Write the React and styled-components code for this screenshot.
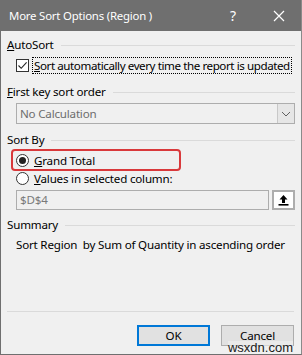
import React from 'react'
import styled, { createGlobalStyle } from 'styled-components'

const Global = createGlobalStyle`
    html, body {
        margin: 0;
        padding: 0;
        background: #f0f0f0;
    }
    * {
        box-sizing: border-box;
    }
`

const App = () => {
    return (
        <>
            <Global />
            <Dialog>
                <TitleBar>
                    <Title>More Sort Options (Region )</Title>
                    <Help>?</Help>
                    <Close>
                        <svg width="12" height="12" viewBox="0 0 12 12">
                            <path d="M1 1 L11 11 M11 1 L1 11" stroke="#fff" strokeWidth="1.2" />
                        </svg>
                    </Close>
                </TitleBar>

                <Body>
                    <GroupLabel $top={6}>
                        <span><u>A</u>utoSort</span>
                        <Rule />
                    </GroupLabel>
                    <CheckRow>
                        <CheckBox>
                            <svg width="11" height="11" viewBox="0 0 11 11">
                                <path d="M1.5 5.5 L4.2 8.3 L9.6 2.4" fill="none" stroke="#222" strokeWidth="1.1" />
                            </svg>
                        </CheckBox>
                        <Focus><u>S</u>ort automatically every time the report is updated</Focus>
                    </CheckRow>

                    <GroupLabel $top={10}>
                        <span><u>F</u>irst key sort order</span>
                        <Rule />
                    </GroupLabel>
                    <Combo>
                        <ComboText>No Calculation</ComboText>
                        <ComboArrow>
                            <svg width="10" height="6" viewBox="0 0 10 6">
                                <path d="M1 1 L5 5 L9 1" fill="none" stroke="#606060" strokeWidth="1" />
                            </svg>
                        </ComboArrow>
                    </Combo>

                    <GroupLabel $top={8}>
                        <span>Sort By</span>
                        <Rule />
                    </GroupLabel>
                    <Highlight>
                        <Radio $checked />
                        <RadioText><u>G</u>rand Total</RadioText>
                    </Highlight>
                    <RadioRow>
                        <Radio />
                        <RadioText><u>V</u>alues in selected column:</RadioText>
                    </RadioRow>
                    <RefRow>
                        <RefInput>$D$4</RefInput>
                        <RefButton>
                            <svg width="11" height="12" viewBox="0 0 11 12">
                                <path d="M5.5 1 L1.5 5.5 H4 V9 H7 V5.5 H9.5 Z" fill="#000" />
                                <rect x="0.5" y="10" width="10" height="1.6" fill="#000" />
                            </svg>
                        </RefButton>
                    </RefRow>

                    <GroupLabel $top={7}>
                        <span>Summary</span>
                        <Rule />
                    </GroupLabel>
                    <Summary>Sort Region&nbsp; by Sum of Quantity in ascending order</Summary>

                    <Spacer />
                    <Separator />
                    <Buttons>
                        <Button $primary>OK</Button>
                        <Button>Cancel</Button>
                    </Buttons>
                </Body>
                <Watermark>wsxdn.com</Watermark>
            </Dialog>
        </>
    )
}

export default App

const Dialog = styled.div`
    position: relative;
    width: 302px;
    height: 355px;
    display: flex;
    flex-direction: column;
    background: #f0f0f0;
    border-left: 1px solid #6f6f6f;
    border-right: 1px solid #8a8a8a;
    border-bottom: 1px solid #6f6f6f;
    font-family: "Noto Sans", "Liberation Sans", sans-serif;
    font-size: 11.6px;
    letter-spacing: -0.2px;
    color: #000;
    overflow: hidden;
`

const TitleBar = styled.div`
    height: 31px;
    flex: none;
    margin: 0 -1px;
    background: #6f6f6f;
    display: flex;
    align-items: center;
    padding: 0 0 0 9px;
    color: #fff;
`

const Title = styled.div`
    flex: 1;
    font-size: 11.4px;
    letter-spacing: -0.2px;
`

const Help = styled.div`
    width: 46px;
    text-align: center;
    font-size: 14px;
`

const Close = styled.div`
    width: 46px;
    display: flex;
    align-items: center;
    justify-content: center;
`

const Body = styled.div`
    flex: 1;
    display: flex;
    flex-direction: column;
    padding: 0 6px 0 6px;
`

const GroupLabel = styled.div`
    height: 16px;
    margin-top: ${(p) => p.$top}px;
    display: flex;
    align-items: center;
    gap: 7px;
    line-height: 16px;
`

const Rule = styled.div`
    flex: 1;
    height: 1px;
    background: #dadada;
`

const CheckRow = styled.div`
    height: 17px;
    margin-top: 4px;
    padding-left: 9px;
    display: flex;
    align-items: center;
    gap: 3px;
`

const CheckBox = styled.div`
    width: 13px;
    height: 13px;
    border: 1px solid #333;
    background: #fff;
    display: flex;
    align-items: center;
    justify-content: center;
`

const Focus = styled.div`
    border: 1px dotted #000;
    line-height: 15px;
    padding: 0 1px;
    letter-spacing: -0.42px;
    white-space: nowrap;
`

const Combo = styled.div`
    height: 21px;
    margin: 3px 0 0 9px;
    border: 1px solid #adadad;
    background: #f0f0f0;
    display: flex;
    align-items: stretch;
`

const ComboText = styled.div`
    flex: 1;
    padding-left: 3px;
    line-height: 19px;
    color: #6d6d6d;
`

const ComboArrow = styled.div`
    width: 17px;
    border-left: 1px solid #c8c8c8;
    background: #e6e6e6;
    display: flex;
    align-items: center;
    justify-content: center;
`

const Highlight = styled.div`
    height: 22px;
    width: 170px;
    margin: 1px 0 0 4px;
    padding-left: 3px;
    border: 2px solid #d9393b;
    border-radius: 4px;
    display: flex;
    align-items: center;
    gap: 5px;
`

const RadioRow = styled.div`
    height: 15px;
    padding-left: 9px;
    display: flex;
    align-items: center;
    gap: 5px;
`

const Radio = styled.div`
    width: 13px;
    height: 13px;
    border-radius: 50%;
    border: 1px solid #333;
    background: #fff;
    display: flex;
    align-items: center;
    justify-content: center;

    &::after {
        content: '';
        width: 7px;
        height: 7px;
        border-radius: 50%;
        background: #222;
        display: ${(p) => (p.$checked ? 'block' : 'none')};
    }
`

const RadioText = styled.span`
    line-height: 15px;
`

const RefRow = styled.div`
    height: 20px;
    margin: 4px 0 0 9px;
    display: flex;
    gap: 3px;
`

const RefInput = styled.div`
    flex: 1;
    border: 1px solid #adadad;
    background: #f0f0f0;
    padding-left: 3px;
    line-height: 18px;
    color: #7a7a7a;
`

const RefButton = styled.div`
    width: 23px;
    border: 2px solid #adadad;
    background: #fff;
    display: flex;
    align-items: center;
    justify-content: center;
`

const Summary = styled.div`
    margin: 4px 0 0 9px;
    line-height: 16px;
    white-space: nowrap;
`

const Spacer = styled.div`
    flex: 1;
`

const Separator = styled.div`
    height: 1px;
    background: #dadada;
    margin-right: 1px;
`

const Buttons = styled.div`
    display: flex;
    justify-content: flex-end;
    gap: 11px;
    padding: 13px 1px 8px 0;
`

const Button = styled.div`
    width: 73px;
    height: 21px;
    background: #e1e1e1;
    border: ${(p) => (p.$primary ? '2px solid #0078d7' : '1px solid #adadad')};
    display: flex;
    align-items: center;
    justify-content: center;
`

const Watermark = styled.div`
    position: absolute;
    right: 8px;
    bottom: 0;
    font-family: "Liberation Sans", sans-serif;
    font-size: 13px;
    line-height: 13px;
    letter-spacing: 0;
    color: #1a1a1a;
    background: rgba(240, 240, 240, 0.6);
`
